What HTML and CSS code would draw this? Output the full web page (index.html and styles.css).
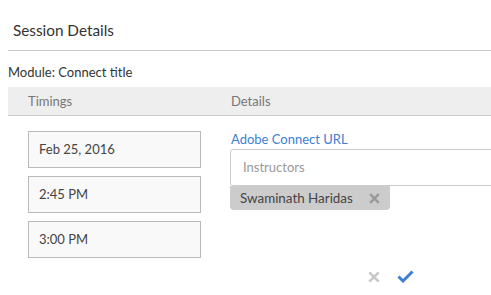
FILE: index.html
```html
<!DOCTYPE html>
<html>
<head>
<meta charset="utf-8">
<link rel="stylesheet" href="styles.css">
</head>
<body>
<div class="page">
  <h1 class="title">Session Details</h1>
  <div class="module">Module: Connect title</div>
  <div class="table-head">
    <div class="col-left">Timings</div>
    <div class="col-right">Details</div>
  </div>
  <div class="table-body">
    <div class="timings">
      <div class="field">Feb 25, 2016</div>
      <div class="field">2:45 PM</div>
      <div class="field">3:00 PM</div>
    </div>
    <div class="details">
      <a class="link">Adobe Connect URL</a>
      <div class="input">Instructors</div>
      <div class="tag">Swaminath Haridas <svg class="tag-x" width="11" height="11" viewBox="0 0 11 11"><path d="M1.2 1.2 L9.8 9.8 M9.8 1.2 L1.2 9.8" stroke="#999" stroke-width="2.4" fill="none"/></svg></div>
    </div>
  </div>
  <div class="actions">
    <svg class="icon-cancel" width="12" height="12" viewBox="0 0 12 12"><path d="M1.3 1.3 L10.7 10.7 M10.7 1.3 L1.3 10.7" stroke="#c8c8c8" stroke-width="2.6" fill="none"/></svg>
    <svg class="icon-ok" width="17" height="13" viewBox="0 0 17 13"><path d="M1.5 6.5 L6 11 L15.5 1.5" stroke="#3d7fd4" stroke-width="3" fill="none" stroke-linejoin="miter"/></svg>
  </div>
</div>
</body>
</html>
```
FILE: styles.css
```css
html, body {
  margin: 0;
  padding: 0;
  overflow: hidden;
  background: #fff;
}
.page {
  width: 620px;
  padding-left: 8px;
  font-family: "Lato", "Open Sans", sans-serif;
  color: #333;
}
.title {
  margin: 0;
  font-weight: normal;
  font-size: 15.3px;
  line-height: 20px;
  padding: 20px 0 10px 5px;
  border-bottom: 1px solid #c8c8c8;
}
.module {
  font-size: 13px;
  line-height: 16px;
  padding: 13px 0 0 0;
  height: 23px;
}
.table-head {
  display: flex;
  background: #eeeeee;
  border-bottom: 1px solid #cccccc;
  height: 28px;
  align-items: center;
  font-size: 13px;
  color: #777;
}
.col-left {
  width: 203px;
  padding-left: 20px;
}
.col-right {
  flex: 1;
}
.table-body {
  display: flex;
  padding-top: 15px;
}
.timings {
  width: 173px;
  margin-left: 20px;
  display: flex;
  flex-direction: column;
  gap: 8px;
}
.field {
  height: 35px;
  border: 1px solid #bbbbbb;
  background: #f9f9f9;
  font-size: 13px;
  line-height: 35px;
  padding-left: 10px;
  color: #444;
}
.details {
  margin-left: 29px;
  flex: 1;
  display: flex;
  flex-direction: column;
  align-items: flex-start;
}
.link {
  color: #3d7fd4;
  font-size: 13px;
  line-height: 16px;
  margin: 0 0 2px 1px;
}
.input {
  width: 100%;
  box-sizing: border-box;
  height: 37px;
  border: 1px solid #cccccc;
  border-radius: 3px;
  font-size: 13px;
  line-height: 35px;
  padding-left: 12px;
  color: #999;
}
.tag {
  background: #cccccc;
  border-radius: 0 0 4px 4px;
  height: 24px;
  line-height: 24px;
  font-size: 13.4px;
  color: #444;
  padding: 0 8px 0 10px;
  display: flex;
  align-items: center;
  gap: 16px;
}
.tag-x {
  display: block;
  margin-right: 2px;
}
.actions {
  display: flex;
  align-items: center;
  gap: 17px;
  padding: 12px 0 0 360px;
}
```
